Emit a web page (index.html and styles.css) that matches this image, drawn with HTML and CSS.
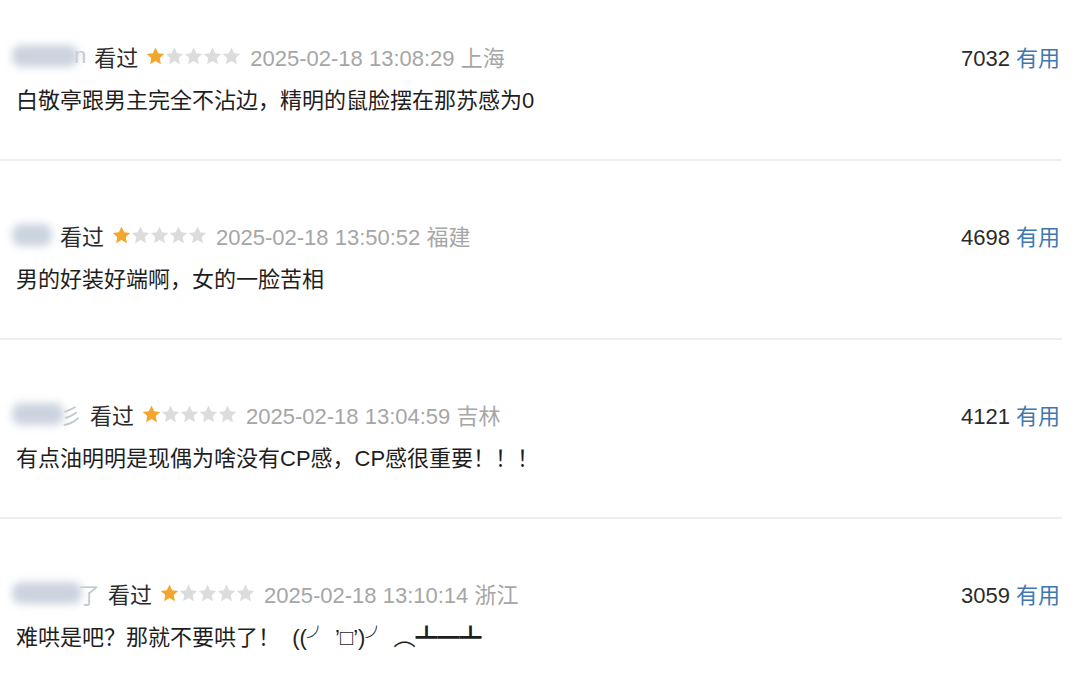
FILE: index.html
```html
<!DOCTYPE html>
<html lang="zh-CN">
<head>
  <meta charset="UTF-8">
  <meta name="viewport" content="width=device-width, initial-scale=1.0">
  <title>短评</title>
  <link rel="stylesheet" href="styles.css">
</head>
<body>
  <svg width="0" height="0" class="defs">
    <defs>
      <path id="star" d="M10 0.6l2.8 5.9 6.4.8-4.7 4.4 1.2 6.4L10 14.9l-5.7 3.2 1.2-6.4L0.8 7.3l6.4-.8z"/>
    </defs>
  </svg>

  <div class="list">
    <div class="review">
      <div class="head">
        <div class="info">
          <span class="user"><span class="blur" style="width:66px"></span><span class="tail">n</span></span>
          <span class="watched">看过</span>
          <span class="stars">
            <svg class="on" viewBox="0 0 20 19"><use href="#star"/></svg><svg viewBox="0 0 20 19"><use href="#star"/></svg><svg viewBox="0 0 20 19"><use href="#star"/></svg><svg viewBox="0 0 20 19"><use href="#star"/></svg><svg viewBox="0 0 20 19"><use href="#star"/></svg>
          </span>
          <span class="time">2025-02-18 13:08:29 上海</span>
        </div>
        <div class="votes">7032 <a href="#">有用</a></div>
      </div>
      <p class="text">白敬亭跟男主完全不沾边，精明的鼠脸摆在那苏感为0</p>
    </div>

    <div class="review">
      <div class="head">
        <div class="info">
          <span class="user"><span class="blur" style="width:40px"></span></span>
          <span class="watched">看过</span>
          <span class="stars">
            <svg class="on" viewBox="0 0 20 19"><use href="#star"/></svg><svg viewBox="0 0 20 19"><use href="#star"/></svg><svg viewBox="0 0 20 19"><use href="#star"/></svg><svg viewBox="0 0 20 19"><use href="#star"/></svg><svg viewBox="0 0 20 19"><use href="#star"/></svg>
          </span>
          <span class="time">2025-02-18 13:50:52 福建</span>
        </div>
        <div class="votes">4698 <a href="#">有用</a></div>
      </div>
      <p class="text">男的好装好端啊，女的一脸苦相</p>
    </div>

    <div class="review">
      <div class="head">
        <div class="info">
          <span class="user"><span class="blur" style="width:52px"></span><span class="tail">彡</span></span>
          <span class="watched">看过</span>
          <span class="stars">
            <svg class="on" viewBox="0 0 20 19"><use href="#star"/></svg><svg viewBox="0 0 20 19"><use href="#star"/></svg><svg viewBox="0 0 20 19"><use href="#star"/></svg><svg viewBox="0 0 20 19"><use href="#star"/></svg><svg viewBox="0 0 20 19"><use href="#star"/></svg>
          </span>
          <span class="time">2025-02-18 13:04:59 吉林</span>
        </div>
        <div class="votes">4121 <a href="#">有用</a></div>
      </div>
      <p class="text">有点油明明是现偶为啥没有CP感，CP感很重要！！！</p>
    </div>

    <div class="review">
      <div class="head">
        <div class="info">
          <span class="user"><span class="blur" style="width:70px"></span><span class="tail">了</span></span>
          <span class="watched">看过</span>
          <span class="stars">
            <svg class="on" viewBox="0 0 20 19"><use href="#star"/></svg><svg viewBox="0 0 20 19"><use href="#star"/></svg><svg viewBox="0 0 20 19"><use href="#star"/></svg><svg viewBox="0 0 20 19"><use href="#star"/></svg><svg viewBox="0 0 20 19"><use href="#star"/></svg>
          </span>
          <span class="time">2025-02-18 13:10:14 浙江</span>
        </div>
        <div class="votes">3059 <a href="#">有用</a></div>
      </div>
      <p class="text">难哄是吧？那就不要哄了！&nbsp;&nbsp;((╯ ’□’)╯ ︵┻━┻</p>
    </div>
  </div>
</body>
</html>
```

FILE: styles.css
```css
body {
  margin: 0;
  background-color: #ffffff;
  font-family: "Liberation Sans", "Noto Sans CJK SC", sans-serif;
  color: #333333;
  overflow: hidden;
}

.defs {
  position: absolute;
}

.list {
  width: 1062px;
}

.review {
  padding: 59px 2px 43px 16px;
  border-bottom: 2px solid #eeeeee;
}

.review:first-child {
  padding-top: 41px;
}

.head {
  display: flex;
  justify-content: space-between;
  align-items: center;
  height: 30px;
  font-size: 22px;
}

.info {
  display: flex;
  align-items: center;
  gap: 8px;
}

.user {
  display: flex;
  align-items: center;
  margin-left: -4px;
}

.blur {
  display: inline-block;
  height: 22px;
  background-color: #cbd3df;
  border-radius: 9px;
  filter: blur(4px);
}

.tail {
  color: #c4c8ce;
  margin-left: -4px;
}

.watched {
  color: #2b2b2b;
}

.stars {
  display: flex;
  gap: 0;
  margin-right: 1px;
}

.stars svg {
  width: 19px;
  height: 18px;
  fill: #dcdcdc;
}

.stars svg.on {
  fill: #f4a52b;
}

.time {
  color: #a6a6a6;
}

.votes {
  color: #2b2b2b;
}

.votes a {
  color: #3f78ae;
  text-decoration: none;
}

.text {
  margin: 15px 0 0;
  height: 30px;
  line-height: 30px;
  font-size: 22px;
  color: #1e1e1e;
}
```
